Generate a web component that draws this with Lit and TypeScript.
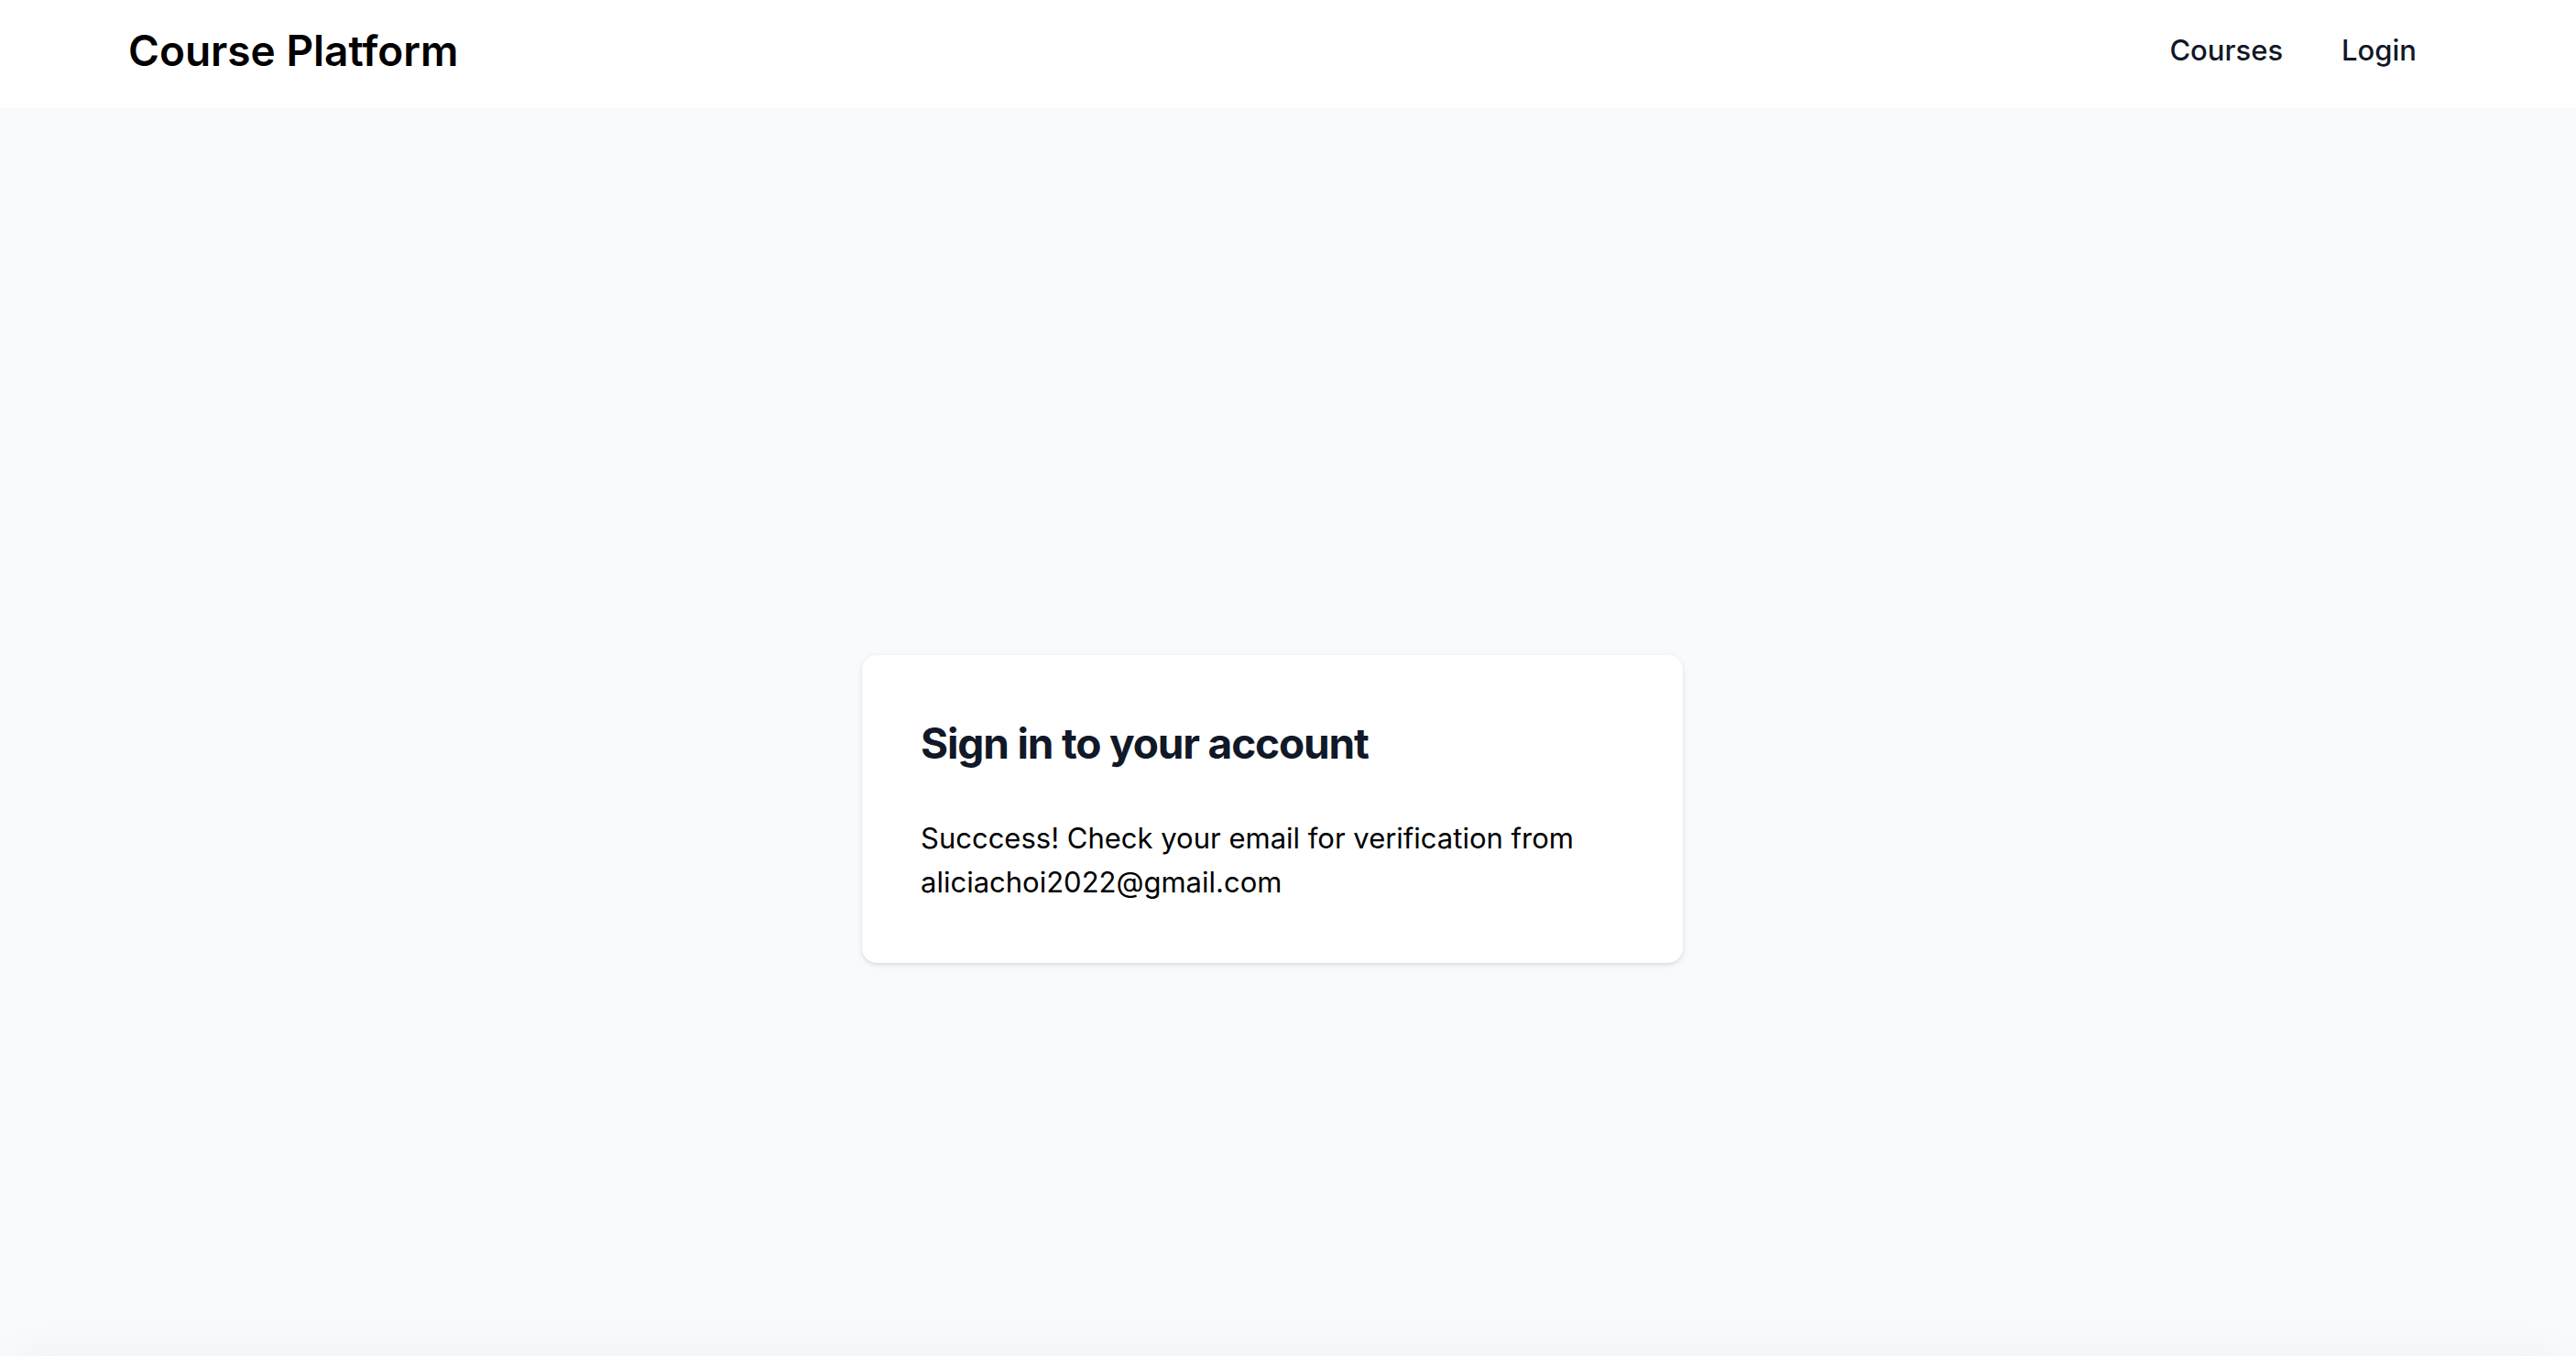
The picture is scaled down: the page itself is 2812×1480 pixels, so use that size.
import { LitElement, html, css } from "lit";
import { customElement, property } from "lit/decorators.js";

@customElement("site-header")
class SiteHeader extends LitElement {
  static styles = css`
    :host { display: block; background: #ffffff; }
    .bar {
      display: flex;
      align-items: center;
      justify-content: space-between;
      padding: 23px 140px 31px;
    }
    .brand {
      font-size: 46px;
      line-height: 64px;
      font-weight: 600;
      color: #000000;
      text-decoration: none;
    }
    .nav { display: flex; gap: 64px; }
    .link {
      font-size: 31px;
      line-height: 48px;
      font-weight: 500;
      color: #111827;
      text-decoration: none;
    }
  `;
  render() {
    return html`
      <header class="bar">
        <a class="brand" href="#">Course Platform</a>
        <nav class="nav">
          <a class="link" href="#courses">Courses</a>
          <a class="link" href="#login">Login</a>
        </nav>
      </header>
    `;
  }
}

@customElement("sign-in-card")
class SignInCard extends LitElement {
  @property() email = "";

  static styles = css`
    :host { display: block; width: 100%; max-width: 896px; }
    .card {
      display: flex;
      flex-direction: column;
      gap: 48px;
      padding: 64px;
      border-radius: 16px;
      background: #ffffff;
      box-shadow: 0 2px 6px rgba(0, 0, 0, 0.1), 0 2px 4px -2px rgba(0, 0, 0, 0.1);
    }
    .title {
      margin: 0;
      font-size: 46px;
      line-height: 64px;
      font-weight: 700;
      letter-spacing: -0.025em;
      color: #111827;
    }
    .message {
      margin: 0;
      font-size: 31px;
      line-height: 48px;
      color: #000000;
    }
  `;
  render() {
    return html`
      <section class="card">
        <h1 class="title">Sign in to your account</h1>
        <p class="message" role="status">
          Succcess! Check your email for verification from ${this.email}
        </p>
      </section>
    `;
  }
}

@customElement("app-root")
class AppRoot extends LitElement {
  static styles = css`
    :host {
      display: block;
      background: #f9fafc;
      font-family: Inter, "Liberation Sans", sans-serif;
    }
    .page {
      display: flex;
      flex-direction: column;
      min-height: 100vh;
      overflow: hidden;
    }
    .top { background: #ffffff; padding-right: 34px; }
    .main {
      flex: 1;
      display: flex;
      align-items: center;
      justify-content: center;
      padding: 168px 34px 0 0;
    }
    .edge {
      height: 0;
      margin: 0 32px;
      box-shadow: 0 16px 48px 16px rgba(0, 0, 0, 0.05);
    }
  `;
  render() {
    return html`
      <div class="page">
        <div class="top"><site-header></site-header></div>
        <main class="main">
          <sign-in-card email="aliciachoi2022@gmail.com"></sign-in-card>
        </main>
        <div class="edge"></div>
      </div>
    `;
  }
}
